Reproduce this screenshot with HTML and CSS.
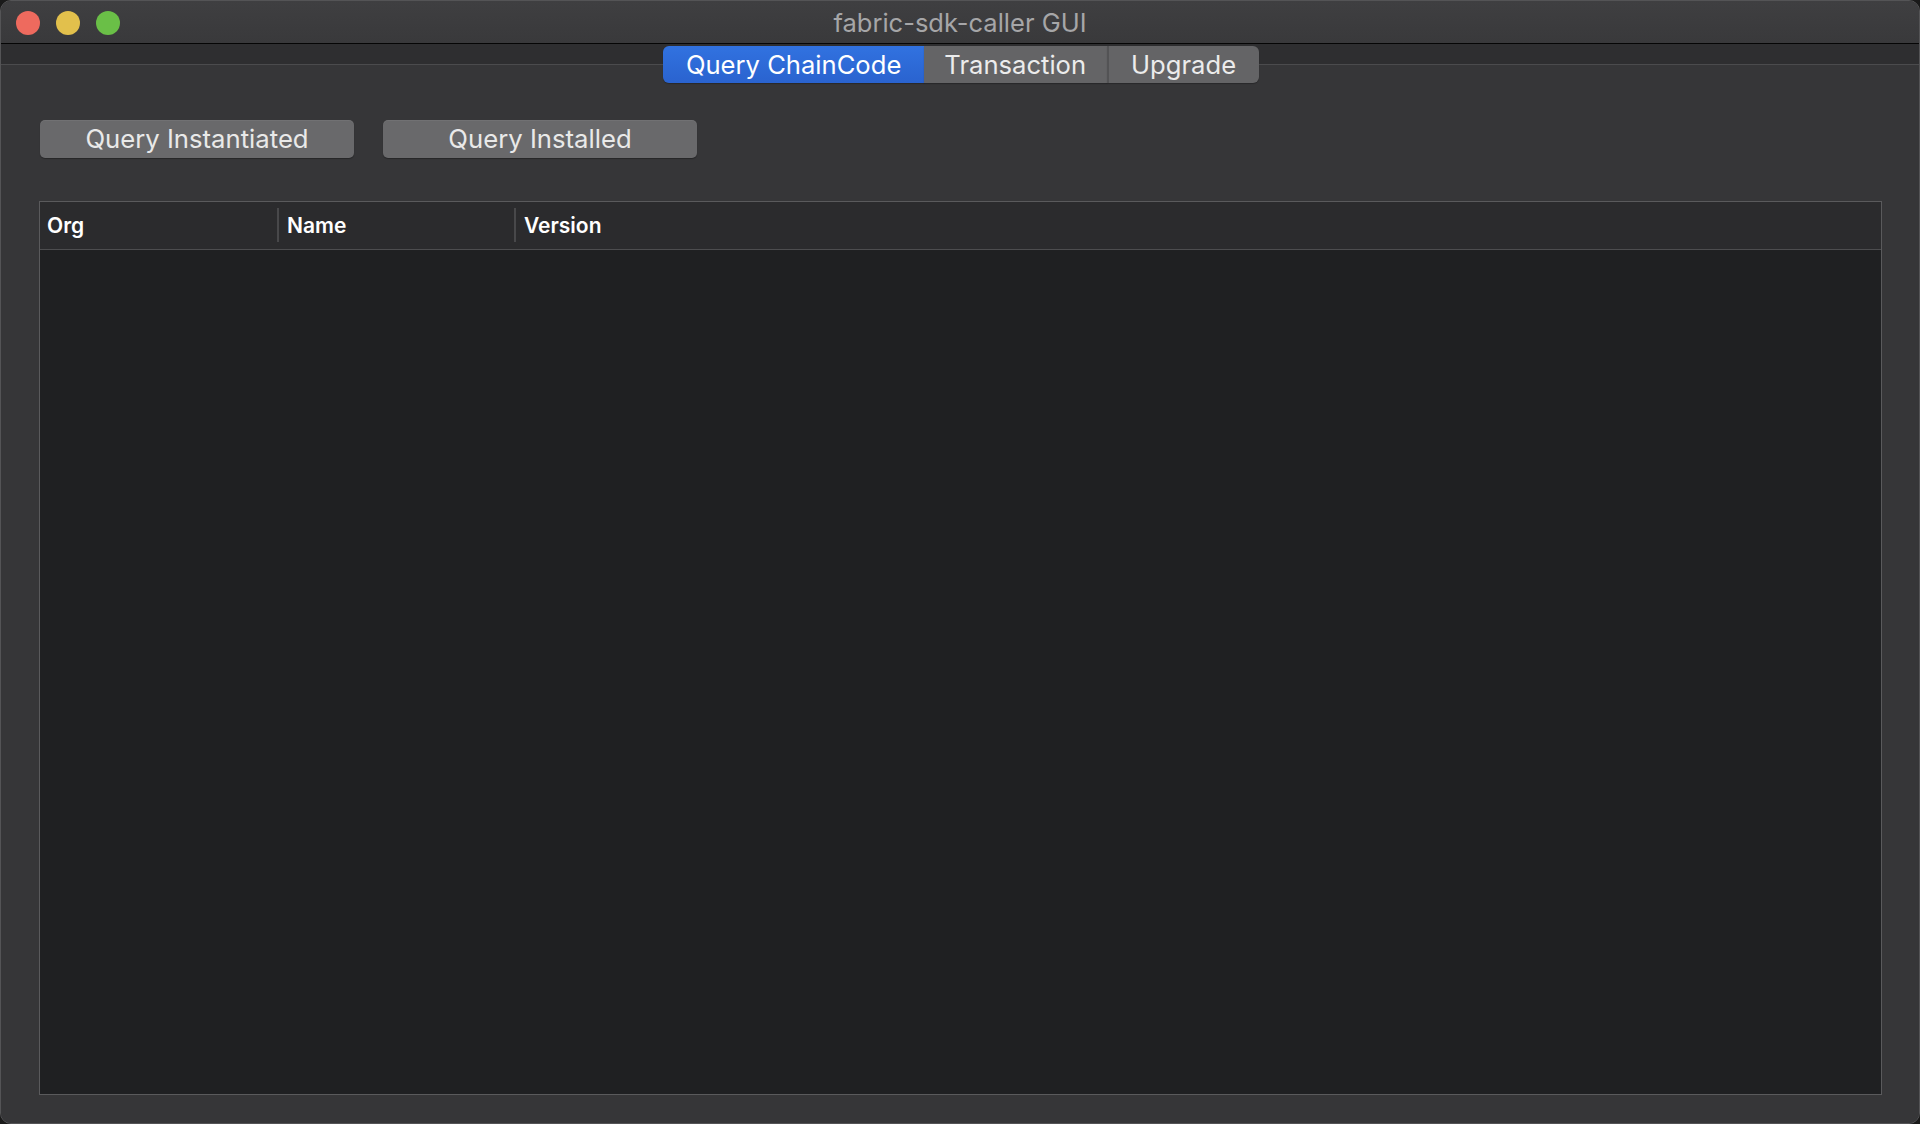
FILE: index.html
```html
<!DOCTYPE html>
<html>
<head>
<meta charset="utf-8">
<title>fabric-sdk-caller GUI</title>
<link rel="stylesheet" href="styles.css">
</head>
<body>
<div class="window">
  <div class="titlebar">
    <div class="lights">
      <span class="light red"></span>
      <span class="light yellow"></span>
      <span class="light green"></span>
    </div>
    <div class="title">fabric-sdk-caller GUI</div>
  </div>
  <div class="tabwidget">
    <div class="tabs">
      <div class="tab active">Query ChainCode</div>
      <div class="tab mid">Transaction</div>
      <div class="tab last">Upgrade</div>
    </div>
    <div class="pane">
      <div class="actions">
        <button class="btn">Query Instantiated</button>
        <button class="btn">Query Installed</button>
      </div>
      <div class="table">
        <div class="thead">
          <div class="th col-org">Org</div>
          <div class="th col-name">Name</div>
          <div class="th col-version">Version</div>
        </div>
        <div class="tbody"></div>
      </div>
    </div>
  </div>
</div>
</body>
</html>
```
FILE: styles.css
```css
* { box-sizing: border-box; }
html, body { margin: 0; padding: 0; }
body {
  background: #1a1a1a;
  width: 1920px;
  height: 1124px;
  overflow: hidden;
  font-family: "Inter", "Liberation Sans", sans-serif;
}
.window {
  width: 1920px;
  height: 1124px;
  border: 1px solid #545456;
  border-radius: 11px;
  overflow: hidden;
  background: #2e2e30;
  display: flex;
  flex-direction: column;
}
.titlebar {
  height: 43px;
  flex: 0 0 43px;
  background: linear-gradient(#3f3f41, #39393b);
  border-bottom: 1px solid #050505;
  display: flex;
  align-items: center;
  position: relative;
}
.lights {
  display: flex;
  gap: 16px;
  padding-left: 15px;
  margin-top: 1px;
}
.light {
  width: 24px;
  height: 24px;
  border-radius: 50%;
  display: block;
}
.red { background: #ee6a5e; }
.yellow { background: #e2c04c; }
.green { background: #6abf47; }
.title {
  position: absolute;
  left: 0;
  right: 0;
  top: 0;
  bottom: 0;
  display: flex;
  align-items: center;
  justify-content: center;
  color: #a6a6a8;
  font-size: 25.5px;
  pointer-events: none;
}
.tabwidget {
  flex: 1;
  display: flex;
  flex-direction: column;
}
.tabs {
  position: relative;
  z-index: 1;
  display: flex;
  justify-content: center;
  margin-top: 2px;
  margin-bottom: -19px;
  padding-left: 2px;
}
.tab {
  height: 37px;
  display: flex;
  align-items: center;
  padding: 0 22.5px;
  background: #646466;
  color: #ececec;
  font-size: 25.6px;
  border-left: 2px solid #535355;
  box-shadow: 0 1px 1px rgba(0,0,0,0.25);
}
.tab.mid { padding: 0 20.5px; }
.tab.active {
  background: linear-gradient(#3172e0, #2a63cf);
  color: #ffffff;
  border-left: none;
  border-radius: 6px 0 0 6px;
}
.tab.active + .tab { border-left: none; }
.tab.last { border-radius: 0 6px 6px 0; }
.pane {
  flex: 1;
  background: #363638;
  border-top: 1px solid #4b4b4d;
  padding: 55px 37px 28px 38px;
  display: flex;
  flex-direction: column;
}
.actions {
  display: flex;
  gap: 29px;
  padding-left: 1px;
  margin-bottom: 43px;
}
.btn {
  width: 314px;
  height: 38px;
  border: none;
  border-radius: 5px;
  background: #69696b;
  color: #e9e9e9;
  font-family: "Inter", "Liberation Sans", sans-serif;
  font-size: 25.7px;
  padding: 0 0 2px 0;
  box-shadow: 0 1px 1px rgba(0,0,0,0.3), inset 0 1px 0 rgba(255,255,255,0.06);
}
.table {
  flex: 1;
  border: 1px solid #5a5a5c;
  display: flex;
  flex-direction: column;
  background: #1f2022;
}
.thead {
  height: 48px;
  flex: 0 0 48px;
  background: #2b2b2d;
  border-bottom: 1px solid #4d4d4f;
  display: flex;
  align-items: center;
  padding-bottom: 1px;
}
.th {
  color: #ffffff;
  font-weight: 600;
  font-size: 21px;
  height: 34px;
  display: flex;
  align-items: center;
}
.col-org { width: 237px; padding-left: 7px; }
.col-name {
  width: 237px;
  border-left: 2px solid #48484a;
  padding-left: 8px;
}
.col-version {
  flex: 1;
  border-left: 2px solid #48484a;
  padding-left: 8px;
}
.tbody { flex: 1; }
```
